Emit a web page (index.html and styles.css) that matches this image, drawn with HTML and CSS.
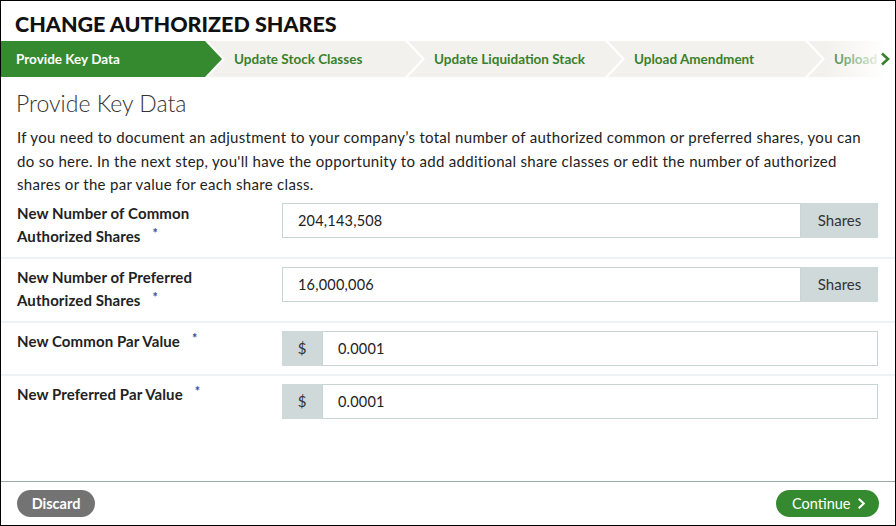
FILE: index.html
```html
<!DOCTYPE html>
<html lang="en">
<head>
    <meta charset="UTF-8">
    <title>Change Authorized Shares</title>
    <link rel="stylesheet" href="styles.css">
</head>
<body>
    <div class="modal">
        <h1 class="modal-title">CHANGE AUTHORIZED SHARES</h1>

        <div class="stepper">
            <div class="step active">Provide Key Data</div>
            <div class="step">Update Stock Classes</div>
            <div class="step">Update Liquidation Stack</div>
            <div class="step">Upload Amendment</div>
            <div class="step">Upload</div>
            <div class="stepper-more">
                <svg viewBox="0 0 10 14" width="10" height="14">
                    <polyline points="2 1.5 8 7 2 12.5" fill="none" stroke="currentColor" stroke-width="2.6"></polyline>
                </svg>
            </div>
        </div>

        <div class="modal-body">
            <h2 class="section-title">Provide Key Data</h2>
            <p class="intro">If you need to document an adjustment to your company’s total number of authorized common or preferred shares, you can do so here. In the next step, you'll have the opportunity to add additional share classes or edit the number of authorized shares or the par value for each share class.</p>

            <div class="form-row">
                <label class="field-label">New Number of Common Authorized Shares<span class="required">*</span></label>
                <div class="input-group">
                    <input class="input" type="text" value="204,143,508">
                    <span class="addon">Shares</span>
                </div>
            </div>
            <div class="form-row">
                <label class="field-label">New Number of Preferred Authorized Shares<span class="required">*</span></label>
                <div class="input-group">
                    <input class="input" type="text" value="16,000,006">
                    <span class="addon">Shares</span>
                </div>
            </div>
            <div class="form-row">
                <label class="field-label">New Common Par Value<span class="required">*</span></label>
                <div class="input-group">
                    <span class="addon addon-left">$</span>
                    <input class="input" type="text" value="0.0001">
                </div>
            </div>
            <div class="form-row">
                <label class="field-label">New Preferred Par Value<span class="required">*</span></label>
                <div class="input-group">
                    <span class="addon addon-left">$</span>
                    <input class="input" type="text" value="0.0001">
                </div>
            </div>
        </div>

        <div class="modal-footer">
            <button class="btn btn-discard">Discard</button>
            <button class="btn btn-continue">Continue
                <svg viewBox="0 0 10 14" width="9" height="13">
                    <polyline points="2 1.5 8 7 2 12.5" fill="none" stroke="currentColor" stroke-width="2.4"></polyline>
                </svg>
            </button>
        </div>
    </div>
</body>
</html>
```

FILE: styles.css
```css
* {
    margin: 0;
    padding: 0;
    box-sizing: border-box;
}

body {
    font-family: Lato, "Liberation Sans", sans-serif;
    color: #222;
    background: #fff;
}

.modal {
    width: 896px;
    height: 526px;
    border: 1px solid #000;
    display: flex;
    flex-direction: column;
    overflow: hidden;
}

.modal-title {
    font-size: 21.5px;
    font-weight: 900;
    color: #111;
    padding: 10px 14px 0;
    height: 40px;
    line-height: 26px;
}

/* step progress bar */
.stepper {
    display: flex;
    height: 36px;
    background: #f2f1ed;
    position: relative;
}

.step {
    position: relative;
    flex: 0 0 200px;
    padding-left: 29px;
    display: flex;
    align-items: center;
    font-size: 13.5px;
    font-weight: 700;
    color: #3a7f2b;
    white-space: nowrap;
    background: #f2f1ed;
}

.step.active {
    flex-basis: 204px;
    padding-left: 15px;
    background: #358a2f;
    color: #fff;
}

/* chevron separator: white outline behind the step's own colour */
.step::before,
.step::after {
    content: "";
    position: absolute;
    top: 0;
    left: 100%;
    height: 100%;
    z-index: 1;
}

.step::before {
    width: 20px;
    background: #fff;
    clip-path: polygon(0 0, 3px 0, 20px 50%, 3px 100%, 0 100%);
}

.step::after {
    width: 17px;
    background: inherit;
    clip-path: polygon(0 0, 17px 50%, 0 100%);
    z-index: 2;
}

.step:last-of-type::before,
.step:last-of-type::after {
    display: none;
}

.stepper-more {
    position: absolute;
    top: 0;
    right: 0;
    width: 70px;
    height: 100%;
    display: flex;
    align-items: center;
    justify-content: flex-end;
    padding-right: 5px;
    color: #3a7f2b;
    z-index: 3;
    background: linear-gradient(to right, rgba(242, 241, 237, 0) 0, #fff 60px);
}

.stepper-more svg {
    margin-bottom: 1px;
}

.modal-body {
    flex: 1;
}

.section-title {
    font-size: 23px;
    font-weight: 300;
    color: #333;
    padding: 12px 15px 0;
    line-height: 28px;
}

.intro {
    font-size: 15px;
    letter-spacing: 0.3px;
    line-height: 23.5px;
    padding: 9px 16px 0;
    color: #222;
}

.form-row {
    display: flex;
    align-items: flex-start;
    padding: 8px 17px 8px 16px;
    border-bottom: 2px solid #eef2f4;
}

.form-row:first-of-type {
    padding-top: 6px;
}

.form-row:last-child {
    border-bottom: none;
}

.field-label {
    flex: 0 0 265px;
    padding-right: 70px;
    font-size: 15px;
    letter-spacing: 0.1px;
    font-weight: 700;
    line-height: 23px;
    color: #222;
    margin-top: -1px;
}

.required {
    position: relative;
    top: -4px;
    color: #2f4fa0;
    font-size: 12.5px;
    font-weight: 700;
    margin-left: 12px;
}

.input-group {
    flex: 1;
    display: flex;
    height: 35px;
}

.input {
    flex: 1;
    min-width: 0;
    border: 1px solid #c9d5d5;
    font-family: inherit;
    font-size: 14.5px;
    letter-spacing: 0.2px;
    color: #222;
    padding: 0 15px;
    outline: none;
}

.addon {
    display: flex;
    align-items: center;
    justify-content: center;
    width: 77px;
    background: #d0d9da;
    font-size: 15px;
    color: #333;
}

.addon-left {
    width: 40px;
}

.modal-footer {
    border-top: 1px solid #9aaba6;
    height: 44px;
    display: flex;
    align-items: center;
    justify-content: space-between;
    padding: 0 16px 1px;
}

.btn {
    border: none;
    border-radius: 14px;
    height: 27px;
    font-family: inherit;
    font-size: 14.5px;
    font-weight: 700;
    color: #fff;
    display: flex;
    align-items: center;
    gap: 6px;
}

.btn-discard {
    background: #737373;
    padding: 0 16px;
    width: 78px;
    justify-content: center;
}

.btn-continue {
    background: #358a2f;
    padding: 0 14px 0 16px;
    width: 103px;
    font-weight: 400;
}
```
